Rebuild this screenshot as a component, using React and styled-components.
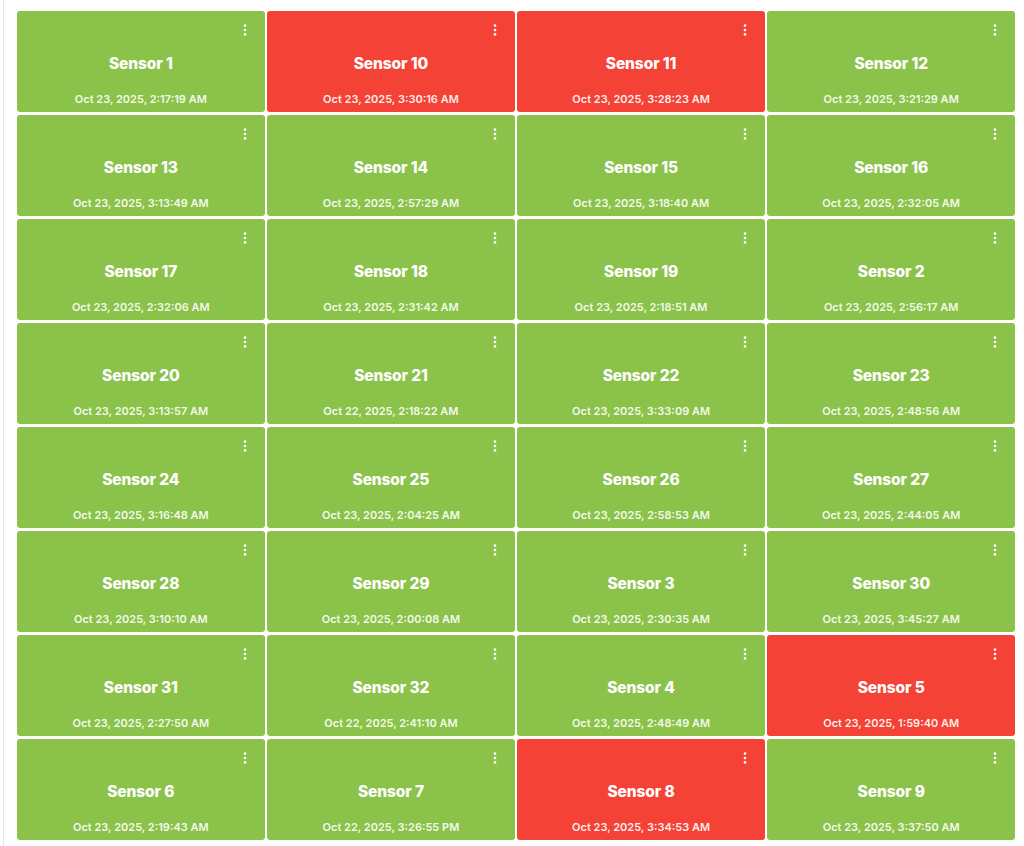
import React from 'react';
import styled, { createGlobalStyle } from 'styled-components';

const GlobalStyle = createGlobalStyle`
  body {
    margin: 0;
    background: #ffffff;
    font-family: Inter, "Noto Sans", "Liberation Sans", sans-serif;
  }
`;

const Page = styled.div`
  margin-left: 3px;
  border-left: 1px solid #e6e6e6;
  padding: 11px 8px 6px 13px;
  min-height: 829px;
`;

const Grid = styled.div`
  display: grid;
  grid-template-columns: repeat(4, 1fr);
  grid-auto-rows: 101px;
  gap: 3px 2.5px;
  width: 998px;
`;

const Card = styled.div`
  position: relative;
  display: flex;
  flex-direction: column;
  align-items: center;
  padding-top: 43px;
  border-radius: 3px;
  background: ${(p) => (p.$alert ? '#f44336' : '#8bc34a')};
  color: #ffffff;
  box-sizing: border-box;
`;

const Title = styled.div`
  font-size: 15.5px;
  font-weight: 800;
  line-height: 20px;
  letter-spacing: -0.1px;
`;

const Stamp = styled.div`
  margin-top: 18px;
  font-size: 11px;
  font-weight: 600;
  line-height: 14px;
  color: rgba(255, 255, 255, 0.92);
`;

const MenuButton = styled.button`
  position: absolute;
  top: 12px;
  right: 16px;
  width: 8px;
  height: 14px;
  padding: 0;
  border: 0;
  background: transparent;
  display: flex;
  align-items: center;
  justify-content: center;
  cursor: pointer;
`;

const Kebab = () => (
  <svg width="4" height="12" viewBox="0 0 4 12">
    <circle cx="2" cy="1.6" r="1.3" fill="#fff" />
    <circle cx="2" cy="6" r="1.3" fill="#fff" />
    <circle cx="2" cy="10.4" r="1.3" fill="#fff" />
  </svg>
);

const sensors = [
  ['Sensor 1', 'Oct 23, 2025, 2:17:19 AM', false],
  ['Sensor 10', 'Oct 23, 2025, 3:30:16 AM', true],
  ['Sensor 11', 'Oct 23, 2025, 3:28:23 AM', true],
  ['Sensor 12', 'Oct 23, 2025, 3:21:29 AM', false],
  ['Sensor 13', 'Oct 23, 2025, 3:13:49 AM', false],
  ['Sensor 14', 'Oct 23, 2025, 2:57:29 AM', false],
  ['Sensor 15', 'Oct 23, 2025, 3:18:40 AM', false],
  ['Sensor 16', 'Oct 23, 2025, 2:32:05 AM', false],
  ['Sensor 17', 'Oct 23, 2025, 2:32:06 AM', false],
  ['Sensor 18', 'Oct 23, 2025, 2:31:42 AM', false],
  ['Sensor 19', 'Oct 23, 2025, 2:18:51 AM', false],
  ['Sensor 2', 'Oct 23, 2025, 2:56:17 AM', false],
  ['Sensor 20', 'Oct 23, 2025, 3:13:57 AM', false],
  ['Sensor 21', 'Oct 22, 2025, 2:18:22 AM', false],
  ['Sensor 22', 'Oct 23, 2025, 3:33:09 AM', false],
  ['Sensor 23', 'Oct 23, 2025, 2:48:56 AM', false],
  ['Sensor 24', 'Oct 23, 2025, 3:16:48 AM', false],
  ['Sensor 25', 'Oct 23, 2025, 2:04:25 AM', false],
  ['Sensor 26', 'Oct 23, 2025, 2:58:53 AM', false],
  ['Sensor 27', 'Oct 23, 2025, 2:44:05 AM', false],
  ['Sensor 28', 'Oct 23, 2025, 3:10:10 AM', false],
  ['Sensor 29', 'Oct 23, 2025, 2:00:08 AM', false],
  ['Sensor 3', 'Oct 23, 2025, 2:30:35 AM', false],
  ['Sensor 30', 'Oct 23, 2025, 3:45:27 AM', false],
  ['Sensor 31', 'Oct 23, 2025, 2:27:50 AM', false],
  ['Sensor 32', 'Oct 22, 2025, 2:41:10 AM', false],
  ['Sensor 4', 'Oct 23, 2025, 2:48:49 AM', false],
  ['Sensor 5', 'Oct 23, 2025, 1:59:40 AM', true],
  ['Sensor 6', 'Oct 23, 2025, 2:19:43 AM', false],
  ['Sensor 7', 'Oct 22, 2025, 3:26:55 PM', false],
  ['Sensor 8', 'Oct 23, 2025, 3:34:53 AM', true],
  ['Sensor 9', 'Oct 23, 2025, 3:37:50 AM', false],
];

export default function App() {
  return (
    <>
      <GlobalStyle />
      <Page>
        <Grid>
          {sensors.map(([name, time, alert]) => (
            <Card key={name} $alert={alert}>
              <MenuButton aria-label="More">
                <Kebab />
              </MenuButton>
              <Title>{name}</Title>
              <Stamp>{time}</Stamp>
            </Card>
          ))}
        </Grid>
      </Page>
    </>
  );
}
